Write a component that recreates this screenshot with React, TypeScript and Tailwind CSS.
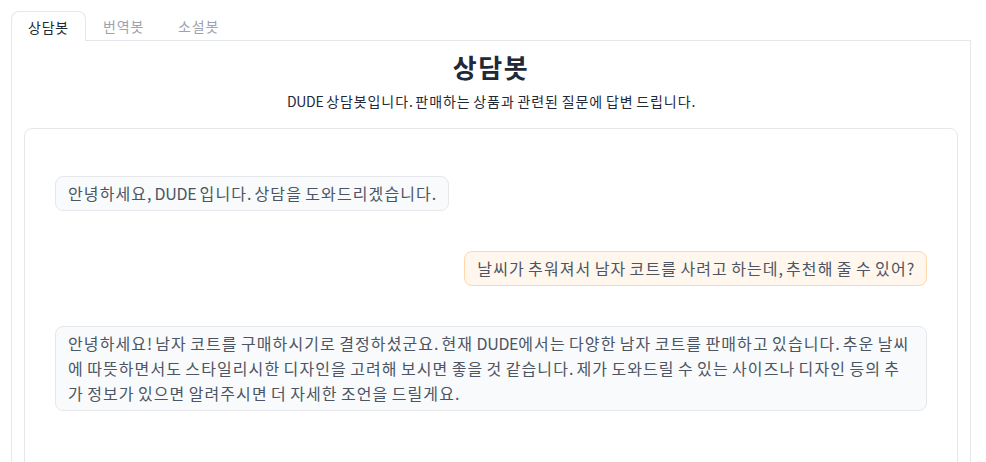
import { useState } from 'react'

const tabs = ['상담봇', '번역봇', '소설봇']

interface Message {
  role: 'bot' | 'user'
  text: string
}

const messages: Message[] = [
  { role: 'bot', text: '안녕하세요, DUDE 입니다. 상담을 도와드리겠습니다.' },
  { role: 'user', text: '날씨가 추워져서 남자 코트를 사려고 하는데, 추천해 줄 수 있어?' },
  {
    role: 'bot',
    text: '안녕하세요! 남자 코트를 구매하시기로 결정하셨군요. 현재 DUDE에서는 다양한 남자 코트를 판매하고 있습니다. 추운 날씨에 따뜻하면서도 스타일리시한 디자인을 고려해 보시면 좋을 것 같습니다. 제가 도와드릴 수 있는 사이즈나 디자인 등의 추가 정보가 있으면 알려주시면 더 자세한 조언을 드릴게요.',
  },
]

// Hangul syllables get a little extra tracking (the reference font sets them full width)
function Spaced({ text, className }: { text: string; className: string }) {
  const parts = text.split(/([\uAC00-\uD7A3]+)/)
  return (
    <>
      {parts.map((p, i) =>
        i % 2 === 1 ? (
          <span key={i} className={className}>
            {p}
          </span>
        ) : (
          <span key={i} className="tracking-[-0.3px]">
            {p}
          </span>
        )
      )}
    </>
  )
}

function Bubble({ message }: { message: Message }) {
  const isUser = message.role === 'user'
  return (
    <div className={`flex ${isUser ? 'justify-end' : 'justify-start'}`}>
      <div
        className={`
          px-3 py-1 border rounded-lg text-[16px] leading-[25px] text-[#4b5563]
          ${isUser ? 'bg-[#fff7ed] border-[#fed7aa]' : 'bg-[#f9fafb] border-[#e5e7eb]'}
        `}
      >
        <Spaced text={message.text} className="tracking-[1.1px]" />
      </div>
    </div>
  )
}

export default function App() {
  const [active, setActive] = useState(0)

  return (
    <div
      className="min-h-screen bg-white pt-[11px] pl-[11px] pr-[15px] overflow-hidden"
      style={{ fontFamily: '"Noto Sans CJK KR", "Noto Sans", sans-serif' }}
    >
      {/* Tabs */}
      <div className="flex">
        {tabs.map((tab, i) => (
          <button
            key={tab}
            onClick={() => setActive(i)}
            className={`
              h-[30px] px-4 text-[14px] leading-[20px] -mb-px tracking-[0.8px]
              ${
                i === active
                  ? 'bg-white border border-b-0 border-[#e5e7eb] rounded-t-lg text-[#1f2937] relative z-10'
                  : 'border border-transparent text-[#9ca3af]'
              }
            `}
          >
            {tab}
          </button>
        ))}
      </div>

      {/* Tab Panel */}
      <div className="border border-[#e5e7eb] px-3 pt-[8px] h-[430px]">
        <h1 className="text-center text-[26px] leading-[36px] font-bold text-[#1f2937] tracking-[1.5px]">
          상담봇
        </h1>
        <p className="mt-[6px] text-center text-[14px] leading-[20px] text-[#1f2937]">
          <Spaced text="DUDE 상담봇입니다. 판매하는 상품과 관련된 질문에 답변 드립니다." className="tracking-[0.9px]" />
        </p>

        {/* Chatbot */}
        <div className="mt-[17px] border border-[#e5e7eb] rounded-lg h-[400px] px-[30px] pt-[47px] flex flex-col gap-[40px]">
          {messages.map((m, i) => (
            <Bubble key={i} message={m} />
          ))}
        </div>
      </div>
    </div>
  )
}
